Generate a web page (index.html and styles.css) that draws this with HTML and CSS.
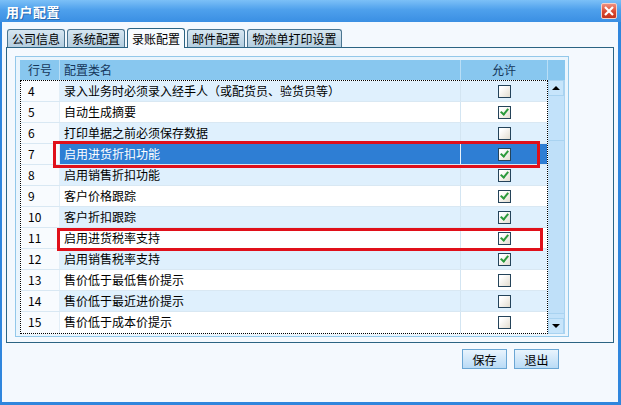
FILE: index.html
```html
<!DOCTYPE html>
<html lang="zh-CN">
<head>
  <meta charset="UTF-8" />
  <title>用户配置</title>
  <link rel="stylesheet" href="styles.css">
</head>
<body>
  <div class="window">
    <div class="titlebar">
      <span class="title">用户配置</span>
      <span class="close">
        <svg width="10" height="10" viewBox="0 0 10 10"><path d="M1 1L9 9M9 1L1 9" stroke="#fff" stroke-width="2.2"/></svg>
      </span>
    </div>

    <div class="client">
      <div class="tabs">
        <div class="tab">公司信息</div>
        <div class="tab">系统配置</div>
        <div class="tab active">录账配置</div>
        <div class="tab">邮件配置</div>
        <div class="tab wide">物流单打印设置</div>
      </div>

      <div class="panel">
        <div class="grid">
          <div class="grid-head">
            <div class="hc c-no">行号</div>
            <div class="hc c-name">配置类名</div>
            <div class="hc c-ok">允许</div>
            <div class="hc c-sb"></div>
          </div>
          <div class="grid-body">
            <div class="rows">
              <div class="row alt"><div class="c-no">4</div><div class="c-name">录入业务时必须录入经手人（或配货员、验货员等）</div><div class="c-ok"><span class="chk"></span></div></div>
              <div class="row"><div class="c-no">5</div><div class="c-name">自动生成摘要</div><div class="c-ok"><span class="chk on"></span></div></div>
              <div class="row alt"><div class="c-no">6</div><div class="c-name">打印单据之前必须保存数据</div><div class="c-ok"><span class="chk"></span></div></div>
              <div class="row sel"><div class="c-no">7</div><div class="c-name">启用进货折扣功能</div><div class="c-ok"><span class="chk on"></span></div></div>
              <div class="row alt"><div class="c-no">8</div><div class="c-name">启用销售折扣功能</div><div class="c-ok"><span class="chk on"></span></div></div>
              <div class="row"><div class="c-no">9</div><div class="c-name">客户价格跟踪</div><div class="c-ok"><span class="chk on"></span></div></div>
              <div class="row alt"><div class="c-no">10</div><div class="c-name">客户折扣跟踪</div><div class="c-ok"><span class="chk on"></span></div></div>
              <div class="row"><div class="c-no">11</div><div class="c-name">启用进货税率支持</div><div class="c-ok"><span class="chk on"></span></div></div>
              <div class="row alt"><div class="c-no">12</div><div class="c-name">启用销售税率支持</div><div class="c-ok"><span class="chk on"></span></div></div>
              <div class="row"><div class="c-no">13</div><div class="c-name">售价低于最低售价提示</div><div class="c-ok"><span class="chk"></span></div></div>
              <div class="row alt"><div class="c-no">14</div><div class="c-name">售价低于最近进价提示</div><div class="c-ok"><span class="chk"></span></div></div>
              <div class="row"><div class="c-no">15</div><div class="c-name">售价低于成本价提示</div><div class="c-ok"><span class="chk"></span></div></div>
            </div>
            <div class="vscroll">
              <div class="sb-btn"><span class="arrow up"></span></div>
              <div class="sb-track"><div class="sb-thumb"></div></div>
              <div class="sb-btn"><span class="arrow down"></span></div>
            </div>

            <!-- 红框标注 -->
            <div class="mark mark-a"></div>
            <div class="mark mark-b"></div>
          </div>
        </div>
      </div>

      <div class="actions">
        <button class="btn">保存</button>
        <button class="btn">退出</button>
      </div>
    </div>
  </div>
</body>
</html>
```

FILE: styles.css
```css
* {
  box-sizing: border-box;
}

body {
  margin: 0;
  font-family: "Noto Sans CJK SC", "Noto Sans", sans-serif;
  font-size: 12px;
  color: #000;
  background: #f4f9fe;
}

.window {
  width: 621px;
  height: 405px;
  display: flex;
  flex-direction: column;
  background: #2f86dd;
  padding: 0 3px 3px 2px;
}

.titlebar {
  height: 22px;
  margin: 0 -3px 0 -2px;
  display: flex;
  align-items: center;
  justify-content: space-between;
  padding: 0 4px 0 6px;
  background: linear-gradient(#7cc0f7, #4ea0ec 45%, #3a8fe3);
}
.title {
  color: #fff;
  font-weight: bold;
  font-size: 13px;
  letter-spacing: 0.5px;
  text-shadow: 1px 1px 0 #2a6bb0;
}
.close {
  width: 16px;
  height: 16px;
  display: flex;
  align-items: center;
  justify-content: center;
  border: 1px solid #f4d0c8;
  border-radius: 2px;
  background: linear-gradient(#ee8f7e, #d9482f 55%, #c4341d);
}

.client {
  flex: 1;
  background: #f4f9fe;
  padding: 5px 0 0 4px;
  display: flex;
  flex-direction: column;
}

/* 标签页 */
.tabs {
  display: flex;
  align-items: flex-end;
  gap: 2px;
  height: 20px;
  padding-left: 1px;
}
.tab {
  width: 58px;
  height: 18px;
  line-height: 17px;
  text-align: center;
  border: 1px solid #4a7590;
  border-bottom: none;
  border-radius: 3px 3px 0 0;
  background: linear-gradient(#d6e6f1, #b4cee0);
  color: #000;
}
.tab.wide {
  width: 95px;
}
.tab.active {
  height: 20px;
  line-height: 19px;
  background: #f8fbfe;
  border-color: #2b6483;
  position: relative;
  top: 1px;
}

.panel {
  width: 608px;
  height: 296px;
  border: 1px solid #2b6483;
  background: #f4f9fe;
  padding: 8px 0 0 8px;
}

/* 表格 */
.grid {
  width: 554px;
  height: 281px;
  border: 1px solid #93c8ea;
  background: #eaf5fd;
  padding: 3px 3px 2px 4px;
}
.grid-head {
  display: flex;
  height: 20px;
  background: #88c7ef;
  color: #15365a;
}
.hc {
  line-height: 20px;
  border-right: 1px solid #b9def6;
  padding-left: 4px;
}
.grid-head .c-no {
  width: 40px;
  padding-left: 8px;
}
.grid-head .c-name {
  width: 401px;
}
.grid-head .c-ok {
  width: 87px;
  text-align: center;
  padding-left: 0;
}
.grid-head .c-sb {
  width: 17px;
  border-right: none;
}

.grid-body {
  position: relative;
  display: flex;
}
.rows {
  width: 528px;
  border: 1px dotted #000;
  background: #fff;
}
.row {
  display: flex;
  height: 21px;
  line-height: 20px;
  border-bottom: 1px solid #d9e8f3;
}
.row:last-child {
  border-bottom: none;
}
.row .c-no {
  width: 39px;
  padding-left: 7px;
  background: #f8fbfe;
  border-right: 1px solid #e2eef7;
}
.row .c-name {
  width: 401px;
  padding-left: 4px;
  border-right: 1px solid #d3e5f2;
}
.row .c-ok {
  flex: 1;
  display: flex;
  align-items: center;
  justify-content: center;
}
.row.alt .c-name,
.row.alt .c-ok {
  background: #dff0fd;
}
.row.sel .c-name,
.row.sel .c-ok {
  background: #2e7ed4;
  color: #fff;
}
.row.sel .c-name {
  border-right-color: #e8f2fb;
}

.chk {
  width: 13px;
  height: 13px;
  border: 1px solid #24435a;
  background: linear-gradient(135deg, #ffffff 20%, #e3ddd0);
  position: relative;
}
.chk.on::after {
  content: "";
  position: absolute;
  left: 3px;
  top: 0px;
  width: 3px;
  height: 6px;
  border: solid #2c9a3c;
  border-width: 0 2px 2px 0;
  transform: rotate(40deg);
}

.vscroll {
  width: 17px;
  display: flex;
  flex-direction: column;
  background: #c2e2fa;
  border-right: 1px solid #a9d3f1;
}
.sb-btn {
  height: 16px;
  display: flex;
  align-items: center;
  justify-content: center;
  border: 1px solid #a9d3f1;
  background: #c7e5fb;
}
.sb-track {
  flex: 1;
  padding-top: 44px;
}
.sb-thumb {
  height: 174px;
  border-top: 1px solid #a9d3f1;
  border-bottom: 1px solid #a9d3f1;
  background: #bfe0f9;
}
.arrow {
  width: 0;
  height: 0;
  border-left: 4px solid transparent;
  border-right: 4px solid transparent;
}
.arrow.up {
  border-bottom: 4px solid #000;
}
.arrow.down {
  border-top: 4px solid #000;
}

.mark {
  position: absolute;
  border: 3px solid #e0101a;
}
.mark-a {
  left: 33px;
  top: 61px;
  width: 487px;
  height: 27px;
}
.mark-b {
  left: 37px;
  top: 148px;
  width: 486px;
  height: 23px;
}

/* 按钮 */
.actions {
  display: flex;
  justify-content: flex-end;
  gap: 7px;
  padding-right: 59px;
  margin-top: 6px;
}
.btn {
  width: 45px;
  height: 20px;
  padding: 0;
  font-family: inherit;
  font-size: 12px;
  color: #000;
  border: 1px solid #6aa6d4;
  background: linear-gradient(#e9f4fd, #b9dbf6);
  cursor: pointer;
}
```
